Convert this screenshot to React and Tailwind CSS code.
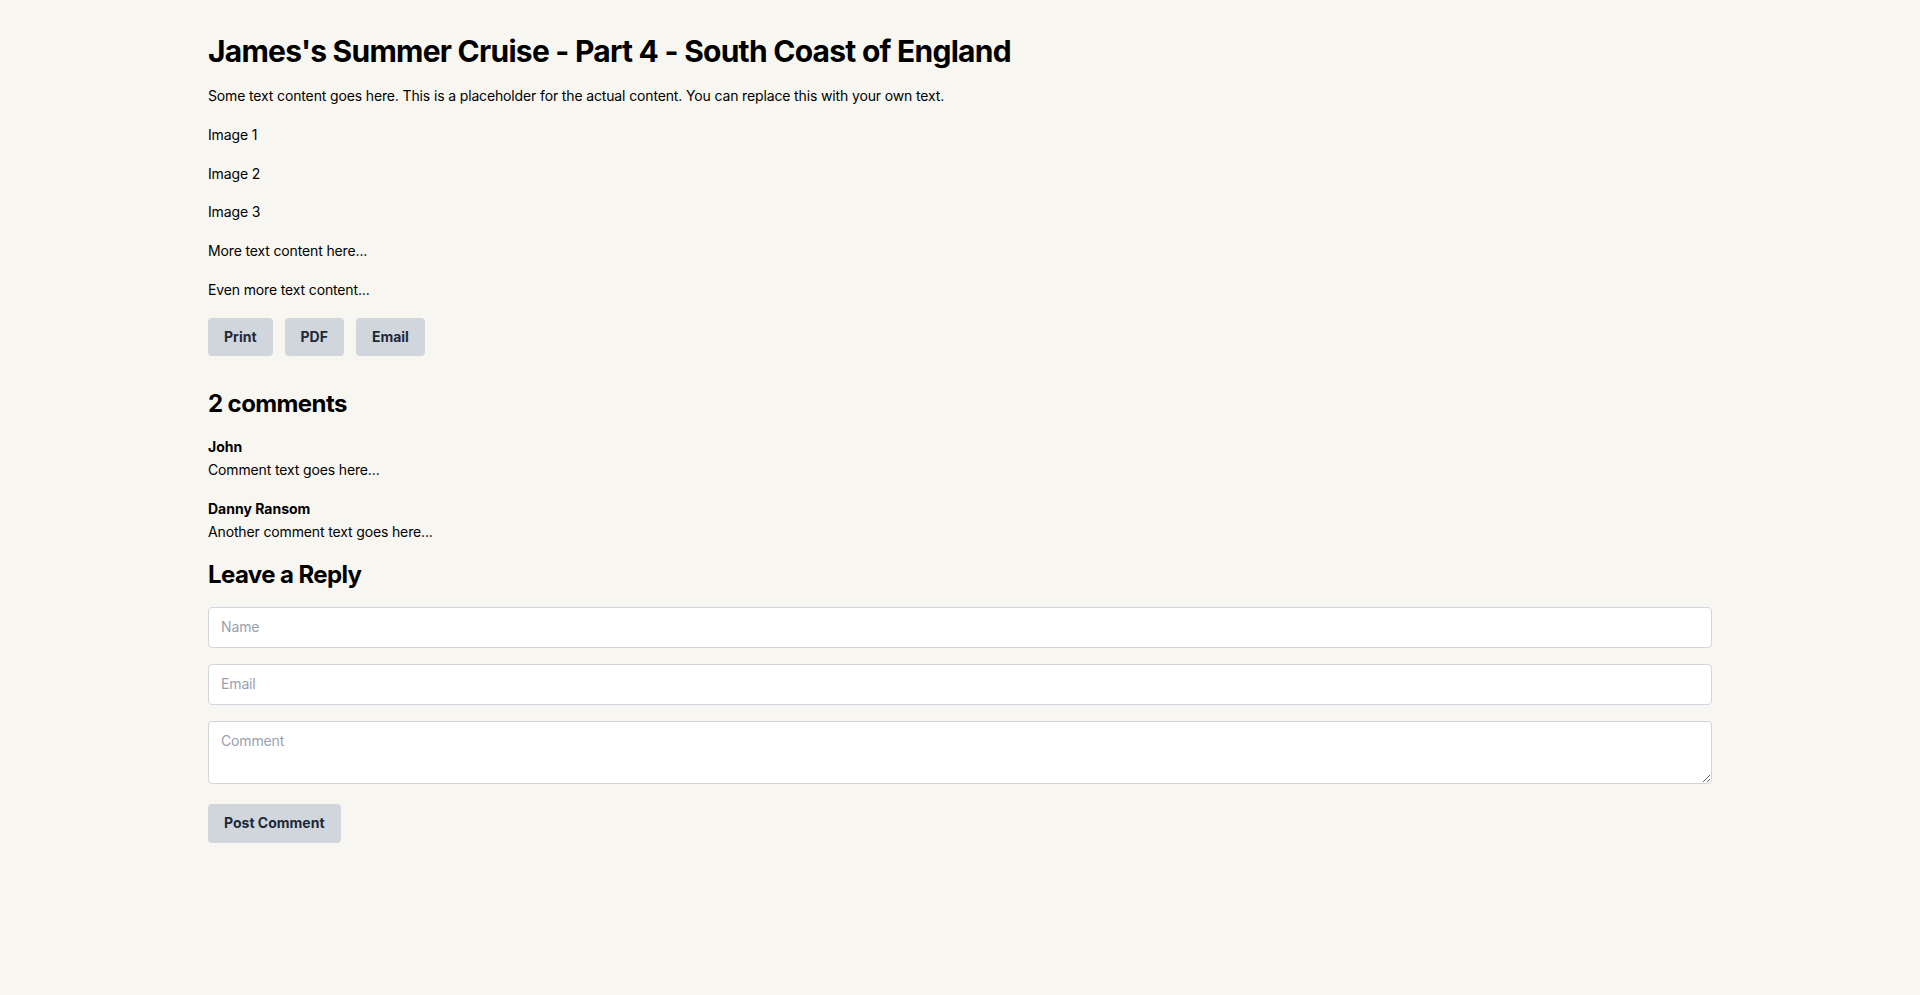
import { useState } from 'react';

const comments = [
  { id: 1, author: 'John', text: 'Comment text goes here...' },
  { id: 2, author: 'Danny Ransom', text: 'Another comment text goes here...' },
];

const App = () => {
  const [name, setName] = useState('');
  const [email, setEmail] = useState('');
  const [comment, setComment] = useState('');

  return (
    <div className="min-h-screen bg-[#f8f6f0] text-black font-['Inter','Noto_Sans',sans-serif] text-sm leading-relaxed tracking-[-0.01em]">
      <div className="container mx-auto px-4 pt-[33px] pb-8">
        <h1 className="text-3xl font-bold tracking-tight mb-4">James's Summer Cruise - Part 4 - South Coast of England</h1>
        <p className="mb-4">
          Some text content goes here. This is a placeholder for the actual content. You can replace this with your own text.
        </p>
        <p className="mb-4">Image 1</p>
        <p className="mb-4">Image 2</p>
        <p className="mb-4">Image 3</p>
        <p className="mb-4">More text content here...</p>
        <p className="mb-4">Even more text content...</p>

        {/* share buttons */}
        <div className="flex gap-3 mb-8">
          <button className="bg-gray-300 text-gray-800 font-bold tracking-normal py-2 px-4 rounded">Print</button>
          <button className="bg-gray-300 text-gray-800 font-bold tracking-normal py-2 px-4 rounded">PDF</button>
          <button className="bg-gray-300 text-gray-800 font-bold tracking-normal py-2 px-4 rounded">Email</button>
        </div>

        <h2 className="text-2xl font-bold tracking-tight mb-4">{comments.length} comments</h2>
        {comments.map((c) => (
          <div key={c.id} className="mb-4">
            <p className="font-bold tracking-normal">{c.author}</p>
            <p>{c.text}</p>
          </div>
        ))}

        <h2 className="text-2xl font-bold tracking-tight mb-4">Leave a Reply</h2>
        <form onSubmit={(e) => e.preventDefault()}>
          <input
            type="text"
            placeholder="Name"
            value={name}
            onChange={(e) => setName(e.target.value)}
            className="block w-full mb-4 px-3 py-2 bg-white border border-gray-300 rounded placeholder:text-gray-400"
          />
          <input
            type="email"
            placeholder="Email"
            value={email}
            onChange={(e) => setEmail(e.target.value)}
            className="block w-full mb-4 px-3 py-2 bg-white border border-gray-300 rounded placeholder:text-gray-400"
          />
          <textarea
            placeholder="Comment"
            value={comment}
            onChange={(e) => setComment(e.target.value)}
            className="block w-full mb-5 px-3 py-2 bg-white border border-gray-300 rounded placeholder:text-gray-400"
          />
          <button type="submit" className="bg-gray-300 text-gray-800 font-bold tracking-normal py-2 px-4 rounded">
            Post Comment
          </button>
        </form>
      </div>
    </div>
  );
};

export default App;
